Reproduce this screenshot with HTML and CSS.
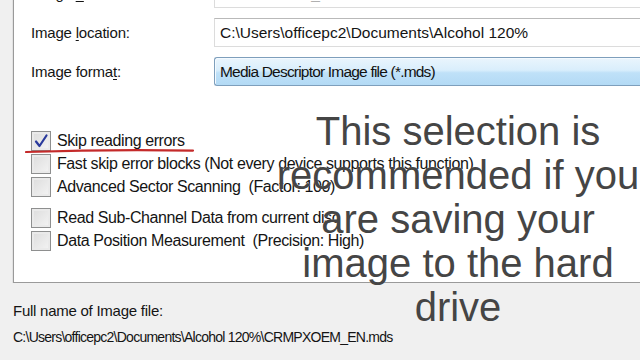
FILE: index.html
```html
<!DOCTYPE html>
<html>
<head>
<meta charset="utf-8">
<link rel="stylesheet" href="styles.css">
</head>
<body>
<div class="screen">
  <div class="panel">
    <div class="fields">
      <div class="field field-first">
        <span class="label">Image <u>n</u>ame:</span>
        <div class="input input-muted">CRMPXOEM_EN</div>
      </div>
      <div class="field">
        <span class="label">Image <u>l</u>ocation:</span>
        <div class="input">C:\Users\officepc2\Documents\Alcohol 120%</div>
      </div>
      <div class="field">
        <span class="label">Image forma<u>t</u>:</span>
        <div class="input select">Media Descriptor Image file (*.mds)</div>
      </div>
    </div>
    <div class="checks">
      <div class="group">
        <label class="check"><span class="box checked"><svg viewBox="0 0 20 20" width="20" height="20"><path d="M5 10.5 L8.5 15 L15.5 4.5" fill="none" stroke="#2a3a9c" stroke-width="2.2" stroke-linecap="round" stroke-linejoin="round"/></svg></span><span class="ctext">Skip reading errors</span></label>
        <label class="check"><span class="box"></span><span class="ctext">Fast skip error blocks (Not every device supports this function)</span></label>
        <label class="check"><span class="box"></span><span class="ctext">Advanced Sector Scanning&nbsp; (Factor: 100)</span></label>
      </div>
      <div class="group">
        <label class="check"><span class="box"></span><span class="ctext">Read Sub-Channel Data from current disc</span></label>
        <label class="check"><span class="box"></span><span class="ctext">Data Position Measurement&nbsp; (Precision: High)</span></label>
      </div>
      <svg class="underline" viewBox="0 0 170 6" width="170" height="6"><path d="M1 4 Q 85 1.2 168 2.6" fill="none" stroke="#c42a2a" stroke-width="2.2" stroke-linecap="round"/></svg>
    </div>
  </div>
  <div class="fullname">
    <div class="fn-label">Full name of Image file:</div>
    <div class="fn-path">C:\Users\officepc2\Documents\Alcohol 120%\CRMPXOEM_EN.mds</div>
  </div>
  <div class="caption">This selection is<br>recommended if you<br>are saving your<br>image to the hard<br>drive</div>
</div>
</body>
</html>
```
FILE: styles.css
```css
html, body {
  margin: 0;
  padding: 0;
}
body {
  width: 640px;
  height: 360px;
  overflow: hidden;
  background: #f0f0f0;
  font-family: "Liberation Sans", Arial, sans-serif;
  color: #141414;
}
.screen {
  position: relative;
  width: 640px;
  height: 360px;
  overflow: hidden;
}
.panel {
  margin-left: 13px;
  width: 640px;
  height: 283px;
  background: #ffffff;
  border-left: 1px solid #9a9a9a;
  border-bottom: 1px solid #9a9a9a;
  box-shadow: inset 1px 0 0 #ffffff, -1px 0 0 #e2e2e2;
  padding-left: 17px;
  box-sizing: border-box;
}
.fields {
  display: flex;
  flex-direction: column;
  gap: 10px;
}
.field {
  display: flex;
  align-items: center;
  height: 29px;
}
.field-first {
  margin-top: -21px;
}
.label {
  width: 183px;
  font-size: 15px;
  letter-spacing: -0.2px;
  flex: none;
}
.label u {
  text-decoration: underline;
  text-underline-offset: 2px;
}
.input {
  flex: 1;
  height: 29px;
  box-sizing: border-box;
  border: 1px solid #dcdcdc;
  border-top-color: #b9b9b9;
  border-right: none;
  background: #fff;
  font-size: 15.5px;
  letter-spacing: 0;
  line-height: 27px;
  padding-left: 5px;
  white-space: nowrap;
}
.input-muted {
  color: #b0b0b0;
}
.select {
  border: 1px solid #7e9fbc;
  border-right: none;
  border-radius: 3px 0 0 3px;
  background: linear-gradient(#eaf5fd 0%, #d9eefc 45%, #bfe1f8 55%, #b3daf5 100%);
  box-shadow: inset 1px 1px 0 #f4faff;
  color: #111;
  font-size: 15.5px;
  letter-spacing: -0.8px;
}
.checks {
  position: relative;
  margin-top: 45px;
  display: flex;
  flex-direction: column;
  gap: 11px;
}
.group {
  display: flex;
  flex-direction: column;
  gap: 3px;
}
.check {
  display: flex;
  align-items: center;
  height: 20px;
  gap: 6px;
}
.box {
  width: 20px;
  height: 20px;
  box-sizing: border-box;
  border: 1px solid #8e8f8f;
  background: linear-gradient(135deg, #dcdcdc, #f4f4f4);
  box-shadow: inset 0 0 0 2px #eaeaea;
  flex: none;
  display: flex;
}
.box svg {
  display: block;
  margin: -1px;
}
.ctext {
  font-size: 16px;
  letter-spacing: -0.4px;
  white-space: nowrap;
}
.underline {
  position: absolute;
  left: -6px;
  top: 17px;
}
.fullname {
  padding: 19px 0 0 13px;
  display: flex;
  flex-direction: column;
  gap: 10px;
}
.fn-label {
  font-size: 15px;
  letter-spacing: -0.25px;
}
.fn-path {
  font-size: 14px;
  letter-spacing: -0.75px;
}
.caption {
  position: absolute;
  left: 258px;
  top: 109px;
  width: 400px;
  text-align: center;
  font-family: "Liberation Sans", Arial, sans-serif;
  font-size: 40px;
  line-height: 44px;
  color: #454545;
  text-shadow: 0 0 1px rgba(255,255,255,0.6);
}
```
